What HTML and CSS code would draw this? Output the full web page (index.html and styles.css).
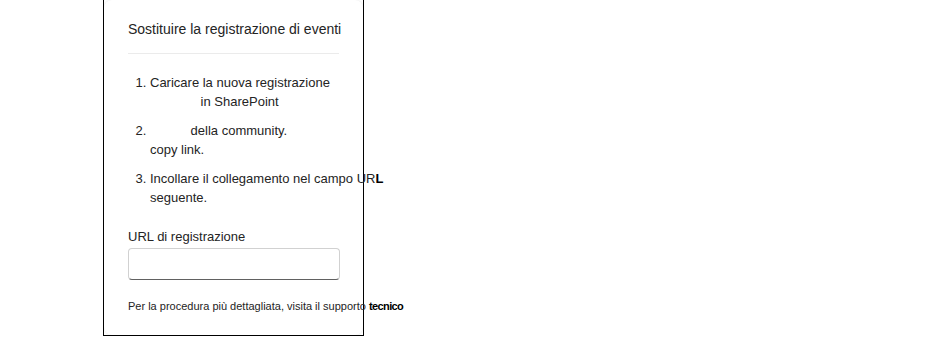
FILE: index.html
```html
<!DOCTYPE html>
<html lang="it">
<head>
<meta charset="utf-8">
<title>Sostituire la registrazione di eventi</title>
<link rel="stylesheet" href="styles.css">
</head>
<body>
<div class="stage">
  <div class="frame">
    <div class="card">
      <h1 class="title">Sostituire la registrazione di eventi</h1>
      <hr class="divider">
      <ol class="steps">
        <li>Caricare la nuova registrazione <span class="gap gap1"></span> in SharePoint</li>
        <li class="narrow"><span class="gap gap2"></span> della community. copy link.</li>
        <li class="wide">Incollare il collegamento nel campo UR<span class="outside">L</span> seguente.</li>
      </ol>
      <label class="label" for="url">URL di registrazione</label>
      <input class="input" id="url" type="text">
      <p class="footer">Per la procedura più dettagliata, visita il supporto <span class="outside">tecnico</span></p>
    </div>
  </div>
</div>
</body>
</html>
```
FILE: styles.css
```css
html, body {
  margin: 0;
  padding: 0;
  background: #ffffff;
}
body {
  font-family: "Liberation Sans", Arial, sans-serif;
  color: #242424;
}
.stage {
  padding-left: 103px;
}
.frame {
  width: 259px;
  height: 335px;
  border: 1px solid #000;
  border-top: none;
}
.card {
  height: 100%;
  box-sizing: border-box;
  border-radius: 8px;
  box-shadow: 0 0 2px rgba(0,0,0,0.12);
  padding: 21px 24px 0 24px;
}
.title {
  margin: 0;
  font-size: 14px;
  font-weight: normal;
  line-height: 16px;
  white-space: nowrap;
}
.divider {
  border: none;
  border-top: 1px solid #ebebeb;
  margin: 16px 0 0 0;
  height: 0;
}
.steps {
  margin: 19px 0 0 0;
  padding-left: 22px;
  font-size: 13px;
  line-height: 19px;
}
.steps li {
  margin-bottom: 10px;
  width: 186px;
}
.steps li.narrow {
  width: 150px;
}
.steps li.wide {
  width: 240px;
}
.gap {
  display: inline-block;
  height: 1px;
}
.gap1 { width: 47px; }
.gap2 { width: 37px; }
.outside {
  color: #000;
  font-weight: bold;
  letter-spacing: -0.6px;
}
.label {
  display: block;
  margin-top: 21px;
  font-size: 13px;
  line-height: 18px;
}
.input {
  display: block;
  box-sizing: border-box;
  width: 212px;
  height: 32px;
  margin-top: 2px;
  border: 1px solid #d1d1d1;
  border-bottom-color: #616161;
  border-radius: 4px;
  background: #fff;
  padding: 0 10px;
  font: inherit;
}
.footer {
  margin: 18px 0 0 0;
  font-size: 11px;
  line-height: 16px;
  white-space: nowrap;
}
```
